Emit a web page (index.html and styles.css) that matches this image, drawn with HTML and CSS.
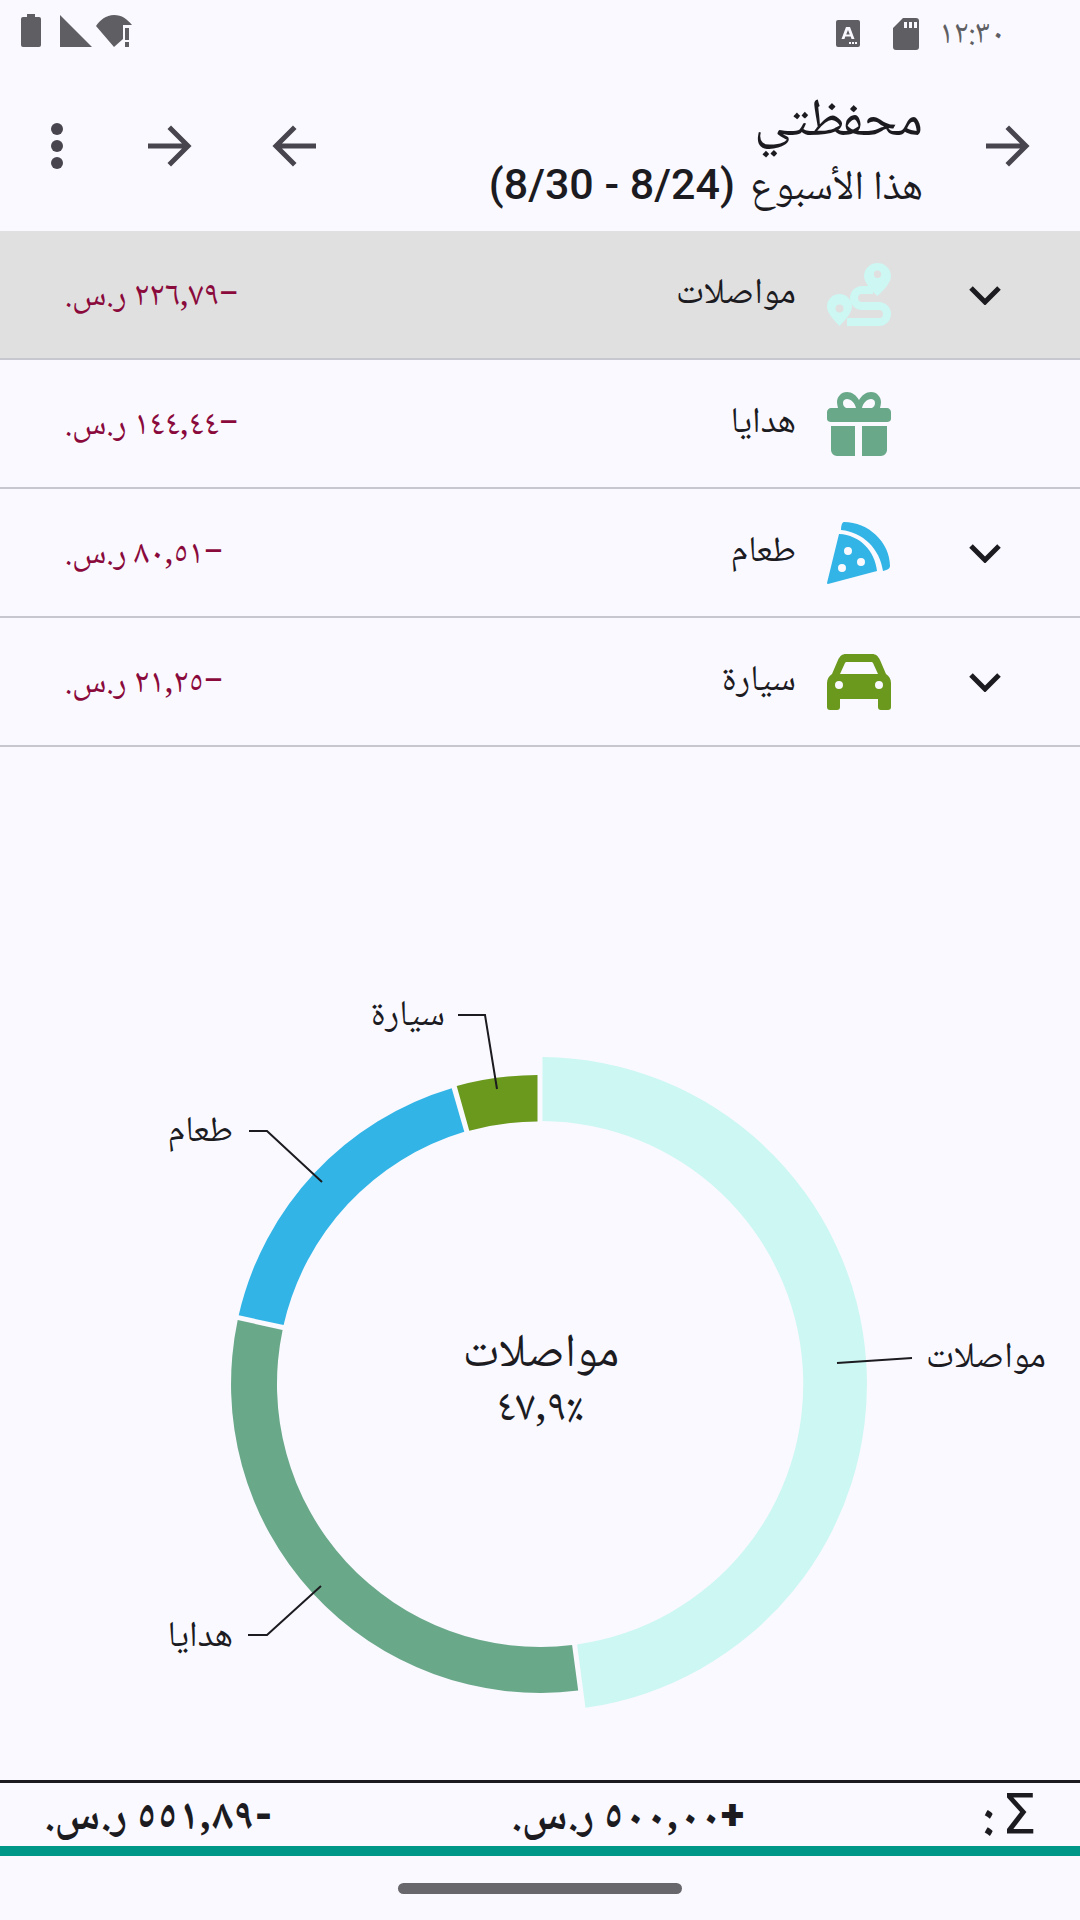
FILE: index.html
```html
<!DOCTYPE html>
<html lang="ar" dir="rtl">
<head>
    <meta charset="UTF-8">
    <meta name="viewport" content="width=device-width, initial-scale=1.0">
    <title>محفظتي</title>
    <link rel="stylesheet" href="styles.css">
</head>
<body>
    <div class="app">
        <!-- Status bar -->
        <div class="status-bar">
            <div class="status-group">
                <span class="clock">١٢:٣٠</span>
                <svg class="sd-icon" viewBox="0 0 26 32"><path fill-rule="evenodd" d="M10 0h13a3 3 0 0 1 3 3v26a3 3 0 0 1-3 3H3a3 3 0 0 1-3-3V10zM11 4v6h3V4zM16 4v6h3V4zM21 4v6h3V4z"/></svg>
                <svg class="a-icon" viewBox="0 0 24 27"><path fill-rule="evenodd" d="M2 0h20a2 2 0 0 1 2 2v23a2 2 0 0 1-2 2H2a2 2 0 0 1-2-2V2a2 2 0 0 1 2-2zM10 7l-4.500 12h3l.8-2.500h5.400l.8 2.500h3L14 7zM12 10l1.800 4.500h-3.600zM13 22v2h2v-2zM16 22v2h2v-2zM19 22v2h2v-2z"/></svg>
            </div>
            <div class="status-group left-icons">
                <svg class="wifi-icon" viewBox="0 0 36 32"><path d="M0 11C4 5 10 0 18 0s13 4 18 10h-9v14l-9 8z"/><path d="M29 13h4v12h-4zM29 27h4v5h-4z"/></svg>
                <svg class="signal-icon" viewBox="0 0 32 32"><path d="M0 0l32 32H0z"/></svg>
                <svg class="battery-icon" viewBox="0 0 20 33"><path d="M6 0h8v3h4a2 2 0 0 1 2 2v26a2 2 0 0 1-2 2H2a2 2 0 0 1-2-2V5a2 2 0 0 1 2-2h4z"/></svg>
            </div>
        </div>

        <!-- Toolbar -->
        <header class="toolbar">
            <svg class="tool-icon" viewBox="0 0 24 24"><path d="M4 12h15.500M12.500 4.500l7.500 7.500-7.500 7.500"/></svg>
            <div class="titles">
                <h1>محفظتي</h1>
                <p>هذا الأسبوع <span class="range">(8/24 - 8/30)</span></p>
            </div>
            <div class="tool-actions">
                <svg class="tool-icon" viewBox="0 0 24 24"><path d="M20 12H4.500M11.500 4.500L4 12l7.500 7.500"/></svg>
                <svg class="tool-icon" viewBox="0 0 24 24"><path d="M4 12h15.500M12.500 4.500l7.500 7.500-7.500 7.500"/></svg>
                <svg class="more-icon" viewBox="0 0 12 48"><circle cx="6" cy="7" r="6"/><circle cx="6" cy="24" r="6"/><circle cx="6" cy="41" r="6"/></svg>
            </div>
        </header>

        <!-- Category list -->
        <div class="cat-list">
            <div class="cat-row selected">
                <svg class="chevron" viewBox="0 0 32 20"><path d="M2 3l14 14L30 3"/></svg>
                <svg class="cat-icon" viewBox="0 0 64 64" fill="#ccf7f3"><path fill-rule="evenodd" d="M50.500 0C58 0 64 6 64 13c0 6-6 13-13.500 20C43 26 37 19 37 13c0-7 6-13 13.500-13zM50.500 7.500a3.700 3.700 0 1 0 0 7.400 3.700 3.700 0 0 0 0-7.400z"/><path fill-rule="evenodd" d="M12.500 31C19.500 31 25 36.500 25 43.500c0 6-6 13-12.500 19.500C6 56.500 0 49.500 0 43.500 0 36.500 5.500 31 12.500 31zM12.500 41.500a4 4 0 1 0 0 8 4 4 0 0 0 0-8z"/><path d="M46 27H35a8 8 0 0 0 0 16h17a8 8 0 0 1 0 16H20" fill="none" stroke="#ccf7f3" stroke-width="8"/></svg>
                <span class="cat-name">مواصلات</span>
                <span class="cat-amount">−٢٢٦,٧٩ ر.س.</span>
            </div>
            <div class="cat-row">
                <svg class="chevron no-children" viewBox="0 0 32 20"><path d="M2 3l14 14L30 3"/></svg>
                <svg class="cat-icon" viewBox="0 0 64 64" fill="#6aa88a"><path fill-rule="evenodd" d="M20 0c5 0 9 3 12 8 3-5 7-8 12-8 6 0 10 5 10 10 0 2-.5 4-1 6h7c2 0 4 2 4 4v7c0 2-2 3-4 3H4c-2 0-4-1-4-3v-7c0-2 2-4 4-4h7c-.5-2-1-4-1-6C10 5 14 0 20 0zM20 7c-2 0-4 1-4 4 0 2 1 4 3 5h10c-1-5-5-9-9-9zM44 7c-4 0-8 4-9 9h10c2-1 3-3 3-5 0-3-2-4-4-4z"/><path d="M4 34h24v30H10c-3 0-6-3-6-6zM35 34h25v24c0 3-3 6-6 6H35z"/></svg>
                <span class="cat-name">هدايا</span>
                <span class="cat-amount">−١٤٤,٤٤ ر.س.</span>
            </div>
            <div class="cat-row">
                <svg class="chevron" viewBox="0 0 32 20"><path d="M2 3l14 14L30 3"/></svg>
                <svg class="cat-icon" viewBox="0 0 64 64" fill="#32b4e6"><path d="M17 1c24 0 46 20 46 44 0 2-2 4-7 5C53 28 36 11 14 9c0-4 1-8 3-8z"/><path fill-rule="evenodd" d="M12 13c21 1 36 17 38 37L1 63c-1 0-1-1-1-1zM21 26a4 4 0 1 0 0 8 4 4 0 0 0 0-8zM34 37a4 4 0 1 0 0 8 4 4 0 0 0 0-8zM15 43a4 4 0 1 0 0 8 4 4 0 0 0 0-8z"/></svg>
                <span class="cat-name">طعام</span>
                <span class="cat-amount">−٨٠,٥١ ر.س.</span>
            </div>
            <div class="cat-row">
                <svg class="chevron" viewBox="0 0 32 20"><path d="M2 3l14 14L30 3"/></svg>
                <svg class="cat-icon" viewBox="0 0 64 56" fill="#6a991e"><path fill-rule="evenodd" d="M19 0h26c4 0 6 2 8 6l6 14c3 2 5 5 5 9v24c0 2-1 3-3 3h-7c-2 0-3-1-3-3v-8H13v8c0 2-1 3-3 3H3c-2 0-3-1-3-3V29c0-4 2-7 5-9l6-14c2-4 4-6 8-6zM20 8c-1 0-1.500 0-2 1l-5 11h38l-5-11c-.5-1-1-1-2-1zM12 27a4 4 0 1 0 0 8 4 4 0 0 0 0-8zM52 27a4 4 0 1 0 0 8 4 4 0 0 0 0-8z"/></svg>
                <span class="cat-name">سيارة</span>
                <span class="cat-amount">−٢١,٢٥ ر.س.</span>
            </div>
        </div>

        <!-- Donut chart, coordinates are the page's own -->
        <div class="chart-area">
            <svg class="donut" viewBox="0 747 1080 1033">
                <path fill="#ccf7f3" d="M542.500 1057A327 327 0 0 1 585.500 1707.800L577.100 1644.400A263 263 0 0 0 542.500 1121z"/>
                <path fill="#6aa88a" d="M578.200 1690.600A309 309 0 0 1 237.700 1320.100L282.600 1329.900A263 263 0 0 0 572.100 1645z"/>
                <path fill="#32b4e6" d="M238.700 1315.300A309 309 0 0 1 451.700 1088.300L464.300 1131.700A263 263 0 0 0 283.600 1325.100z"/>
                <path fill="#6a991e" d="M456.700 1086A309 309 0 0 1 537.500 1075V1121.500A263 263 0 0 0 469.300 1130.700z"/>
                <g class="leaders">
                    <path d="M912 1358L837 1363"/>
                    <path d="M248 1635H267L321 1586"/>
                    <path d="M249 1131H267L322 1182"/>
                    <path d="M458 1015H485L497 1089"/>
                </g>
                <text class="chart-label" x="1046" y="1367">مواصلات</text>
                <text class="chart-label" x="233" y="1646">هدايا</text>
                <text class="chart-label" x="233" y="1141">طعام</text>
                <text class="chart-label" x="445" y="1025">سيارة</text>
                <text class="center-title" x="541" y="1366">مواصلات</text>
                <text class="center-value" x="540" y="1420">٪٤٧,٩</text>
            </svg>
        </div>

        <!-- Totals -->
        <div class="totals">
            <span class="sigma"><span class="sigma-sign">Σ</span> :</span>
            <span class="total"><span class="sign">+</span>٥٠٠,٠٠ ر.س.</span>
            <span class="total"><span class="sign">-</span>٥٥١,٨٩ ر.س.</span>
        </div>
        <div class="budget-bar"></div>
        <div class="nav-area"><div class="nav-pill"></div></div>
    </div>
</body>
</html>
```

FILE: styles.css
```css
* {
    box-sizing: border-box;
}

body {
    margin: 0;
    background: #f9f9ff;
    color: #1c1b1f;
    font-family: "Noto Naskh Arabic", "Noto Sans Arabic", "DejaVu Sans", sans-serif;
}

.app {
    width: 1080px;
    height: 1920px;
    display: flex;
    flex-direction: column;
    overflow: hidden;
}

/* Status bar */
.status-bar {
    height: 60px;
    padding: 14px 75px 0 21px;
    display: flex;
    justify-content: space-between;
    align-items: flex-start;
}

.status-group {
    display: flex;
    align-items: center;
    gap: 22px;
}

.status-group svg {
    fill: #5f5f63;
    display: block;
}

.left-icons {
    gap: 4px;
}

.clock {
    font-size: 33px;
    line-height: 33px;
    padding-top: 6px;
    color: #5f5f63;
    width: 64px;
}

.sd-icon { width: 26px; height: 32px; }
.a-icon { width: 24px; height: 27px; margin-right: 11px; }
.wifi-icon { width: 36px; height: 32px; }
.signal-icon { width: 32px; height: 32px; }
.battery-icon { width: 20px; height: 33px; margin-right: 15px; }

/* Toolbar */
.toolbar {
    height: 171px;
    padding: 0 44px 0 51px;
    display: flex;
    align-items: center;
}

.tool-icon {
    width: 60px;
    height: 60px;
    fill: none;
    stroke: #49454f;
    stroke-width: 2;
    flex: none;
}

.titles {
    margin-right: 53px;
    padding-top: 22px;
    flex: 1;
}

.titles h1 {
    margin: 0;
    font-size: 53px;
    font-weight: 400;
    line-height: 60px;
}

.titles p {
    margin: 0;
    font-size: 41px;
    line-height: 60px;
}

.range {
    margin-right: 6px;
    font-family: Roboto, sans-serif;
    font-size: 43px;
    font-weight: 500;
}

.tool-actions {
    display: flex;
    align-items: center;
    gap: 68px;
}

.more-icon {
    width: 12px;
    height: 48px;
    fill: #49454f;
    margin-right: 7px;
}

/* Category rows */
.cat-row {
    height: 129px;
    padding: 0 79px 0 65px;
    display: flex;
    align-items: center;
    border-bottom: 2px solid #c7c7cf;
}

.cat-row.selected {
    background: #e0e0e0;
}

.chevron {
    width: 32px;
    height: 20px;
    fill: none;
    stroke: #1c1b1f;
    stroke-width: 5;
    flex: none;
}

.no-children {
    visibility: hidden;
}

.cat-icon {
    width: 64px;
    height: 64px;
    margin-right: 78px;
    flex: none;
}

.cat-name {
    margin-right: 31px;
    padding-top: 2px;
    flex: 1;
    font-size: 36px;
}

.cat-amount {
    padding-top: 7px;
    font-size: 34px;
    color: #8a0a3c;
}

/* Chart */
.chart-area {
    height: 1033px;
}

.donut {
    display: block;
    width: 1080px;
    height: 1033px;
}

.leaders path {
    stroke: #1c1b1f;
    stroke-width: 2;
    fill: none;
}

.chart-label {
    font-size: 36px;
    fill: #1c1b1f;
}

.center-title {
    font-size: 47px;
    fill: #1c1b1f;
    text-anchor: middle;
}

.center-value {
    font-size: 44px;
    fill: #1c1b1f;
    text-anchor: middle;
}

/* Totals */
.totals {
    height: 66px;
    padding: 0 43px 0 44px;
    border-top: 3px solid #1c1b1f;
    display: flex;
    justify-content: space-between;
    align-items: center;
}

.total {
    padding-top: 5px;
    font-size: 43px;
    line-height: 52px;
    font-weight: 700;
}

.sign {
    font-family: Roboto, sans-serif;
    font-weight: 900;
}

.sigma {
    padding-top: 8px;
    font-size: 50px;
    line-height: 56px;
    font-weight: 700;
    word-spacing: -5px;
}

.sigma-sign {
    font-family: "DejaVu Sans", sans-serif;
    font-weight: 400;
    font-size: 56px;
}

.budget-bar {
    height: 10px;
    background: #009688;
}

.nav-area {
    height: 64px;
    display: flex;
    justify-content: center;
    padding-top: 27px;
}

.nav-pill {
    width: 284px;
    height: 11px;
    border-radius: 6px;
    background: #68686c;
}
```
